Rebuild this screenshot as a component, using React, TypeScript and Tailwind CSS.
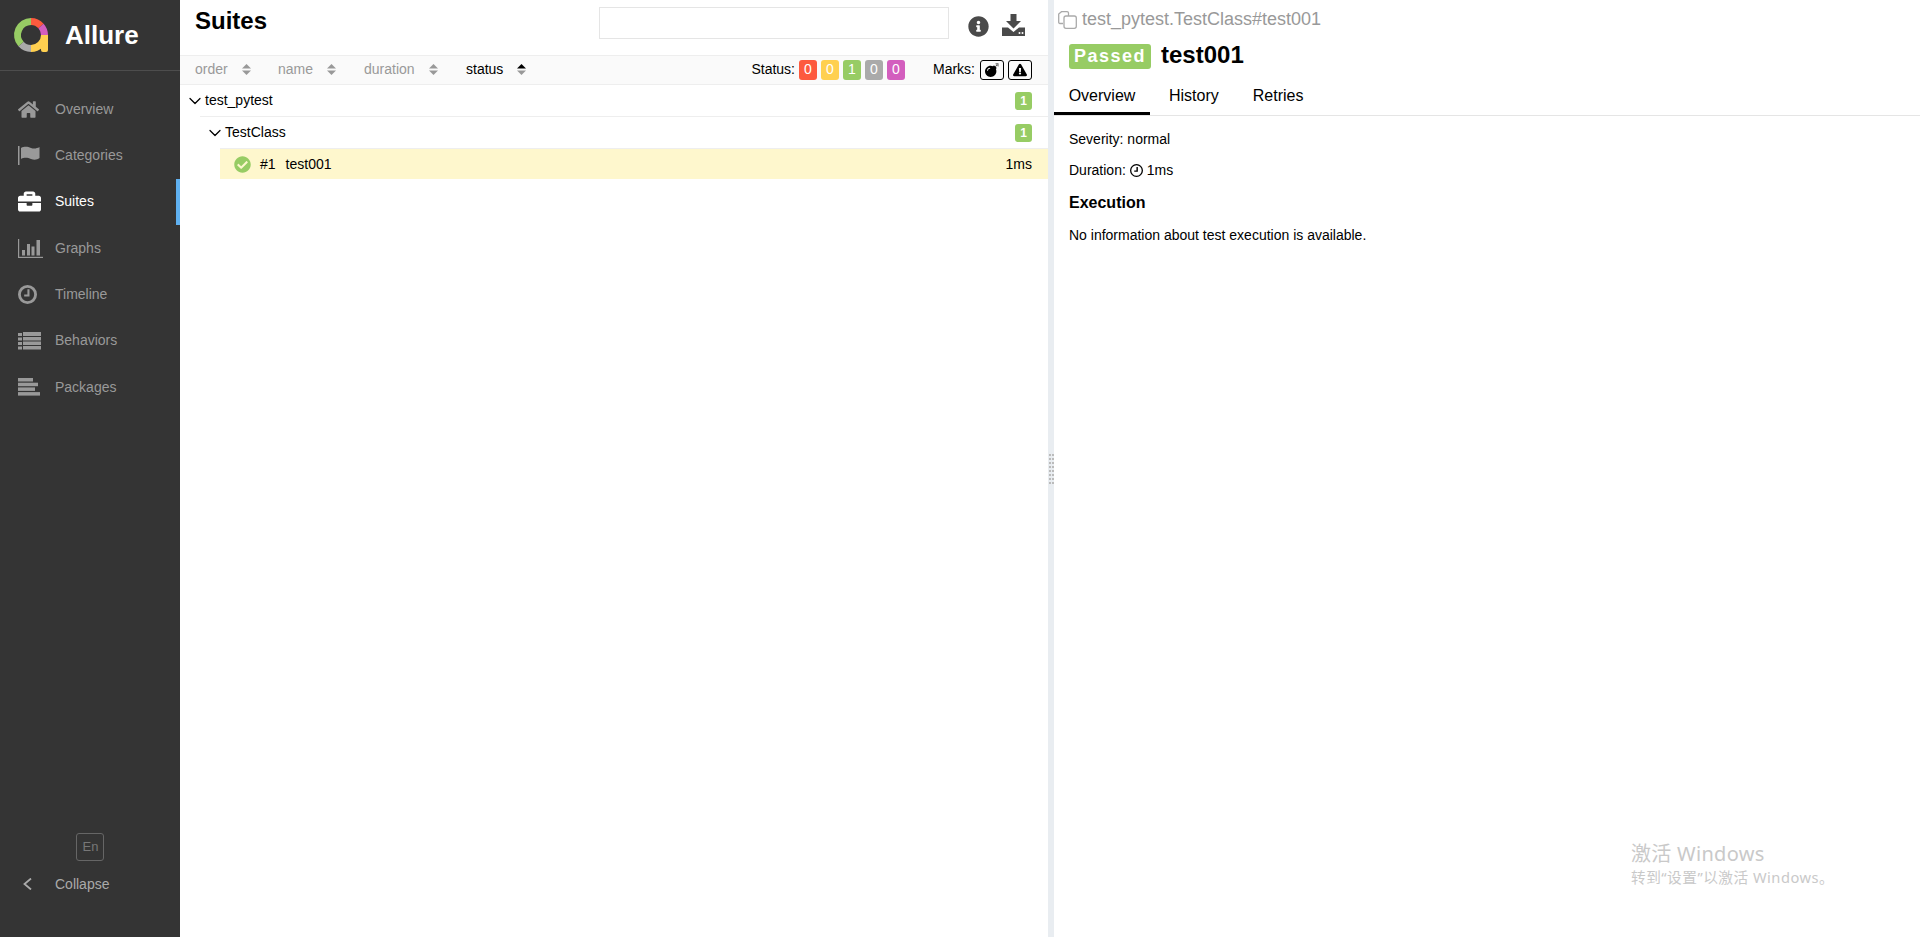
import { ReactNode } from "react";
import { FaBomb, FaBriefcase, FaCheckCircle, FaExclamationTriangle, FaHome, FaInfoCircle } from "react-icons/fa";
import { LuChevronDown } from "react-icons/lu";

const Logo = () => (
  <svg width="36" height="36" viewBox="0 0 36 36" fill="none">
    <path d="M28 18 H35 V33 Q35 35 33 35 H30 Q28 35 28 33 Z" fill="#ffd050" />
    <path d="M18 4.500 A13.500 13.500 0 0 1 28 9" stroke="#fd5a3e" strokeWidth="7" />
    <path d="M28 9 A13.500 13.500 0 0 1 31.500 18" stroke="#d35ebe" strokeWidth="7" />
    <path d="M31.500 18 A13.500 13.500 0 0 1 18 31.500" stroke="#ffd050" strokeWidth="7" />
    <path d="M18 31.500 A13.500 13.500 0 0 1 8 27" stroke="#aaaaaa" strokeWidth="7" />
    <path d="M8 27 A13.500 13.500 0 0 1 18 4.500" stroke="#97cc64" strokeWidth="7" />
  </svg>
);

const FlagIcon = () => (
  <svg width="22" height="19" viewBox="0 0 22 19" fill="currentColor">
    <rect x="0" y="0" width="1.500" height="19" />
    <path d="M3 2 C7 0 10 1 13 2 C16 3 19 2.500 21.500 1 V12 C19 14 16 14 13 13 C10 12 7 11 3 13 Z" />
  </svg>
);

const ChartIcon = () => (
  <svg width="25" height="19" viewBox="0 0 25 19" fill="currentColor">
    <rect x="0" y="0" width="1.200" height="19" />
    <rect x="0" y="17.800" width="25" height="1.200" />
    <rect x="4" y="11" width="3" height="5.500" />
    <rect x="9" y="5" width="3" height="11.500" />
    <rect x="13.500" y="7.500" width="3" height="9" />
    <rect x="18.500" y="1" width="3.500" height="15.500" />
  </svg>
);

const ClockIcon = ({ size, width }: { size: number; width: number }) => (
  <svg width={size} height={size} viewBox="0 0 20 20" fill="none" stroke="currentColor">
    <circle cx="10" cy="10" r={10 - width / 2} strokeWidth={width} />
    <path d="M11 4.500 V11 H6.500" strokeWidth="2.200" />
  </svg>
);

const ListIcon = () => (
  <svg width="23" height="18" viewBox="0 0 23 18" fill="currentColor">
    <rect x="0" y="1" width="4" height="3" /><rect x="5" y="0" width="18" height="4" />
    <rect x="0" y="5.500" width="4" height="3" /><rect x="5" y="5" width="18" height="3.500" />
    <rect x="0" y="10" width="4" height="3" /><rect x="5" y="9.500" width="18" height="3.500" />
    <rect x="0" y="14.500" width="4" height="3" /><rect x="5" y="14" width="18" height="3.500" />
  </svg>
);

const PackagesIcon = () => (
  <svg width="23" height="18" viewBox="0 0 23 18" fill="currentColor">
    <rect x="0" y="0" width="15" height="3.500" />
    <rect x="0" y="4.700" width="20" height="3.500" />
    <rect x="0" y="9.400" width="17" height="3.500" />
    <rect x="0" y="14.100" width="22" height="3.500" />
  </svg>
);

const DownloadIcon = () => (
  <svg width="23" height="22" viewBox="0 0 23 22" fill="#4a4a4a">
    <path d="M8.500 0 H14.500 V7 H19 L11.500 14.500 L4 7 H8.500 Z" />
    <path d="M0 13.500 H6 L11.500 18 L17 13.500 H23 V22 H0 Z" />
    <circle cx="17.500" cy="19" r="1" fill="#fff" />
    <circle cx="20.500" cy="19" r="1" fill="#fff" />
  </svg>
);

const CopyIcon = () => (
  <svg width="19" height="18" viewBox="0 0 19 18" fill="none" stroke="#aaaaaa" strokeWidth="1.300">
    <path d="M5 12.500 H2 Q0.700 12.500 0.700 11 V3 L3.500 0.700 H9 Q10.500 0.700 10.500 2 V5" />
    <rect x="6" y="5" width="12.300" height="12.300" rx="2" />
  </svg>
);

const SortArrows = ({ active }: { active?: boolean }) => (
  <svg width="9" height="11" viewBox="0 0 9 11" className="shrink-0">
    <path d="M4.500 0 L9 4.500 H0 Z" fill={active ? "#000" : "#999"} />
    <path d="M0 6.500 H9 L4.500 11 Z" fill="#999" />
  </svg>
);

const navItems: { label: string; icon: ReactNode; active?: boolean }[] = [
  { label: "Overview", icon: <FaHome size={21} /> },
  { label: "Categories", icon: <FlagIcon /> },
  { label: "Suites", icon: <FaBriefcase size={23} />, active: true },
  { label: "Graphs", icon: <ChartIcon /> },
  { label: "Timeline", icon: <ClockIcon size={19} width={3} /> },
  { label: "Behaviors", icon: <ListIcon /> },
  { label: "Packages", icon: <PackagesIcon /> },
];

const Sidebar = () => (
  <aside className="flex h-full w-[180px] shrink-0 flex-col bg-[#343434] text-[14px]">
    <div className="flex h-[71px] items-center border-b border-[#4d4d4d] pl-[13px]">
      <Logo />
      <span className="ml-[16px] text-[26px] font-bold text-white">Allure</span>
    </div>
    <nav className="mt-[15px] flex flex-col">
      {navItems.map((item) => (
        <div
          key={item.label}
          className={`flex h-[46.33px] items-center border-r-4 ${item.active ? "border-[#5fb0f0] text-white" : "border-transparent text-[#999999]"}`}
        >
          <span className="flex w-[55px] justify-start pl-[18px]">{item.icon}</span>
          {item.label}
        </div>
      ))}
    </nav>
    <div className="mt-auto flex flex-col pb-[41px]">
      <div className="flex justify-center">
        <span className="flex h-[28px] w-[28px] items-center justify-center rounded-[3px] border border-[#666666] pl-[1px] text-[13px] text-[#777777]">En</span>
      </div>
      <div className="mt-[11px] flex h-[24px] items-center text-[#aaaaaa]">
        <span className="flex w-[55px] pl-[23px]">
          <svg width="9" height="12" viewBox="0 0 9 12" fill="none" stroke="currentColor" strokeWidth="1.800">
            <path d="M8 0.500 L1.500 6 L8 11.500" />
          </svg>
        </span>
        Collapse
      </div>
    </div>
  </aside>
);

const sorters = [
  { label: "order", width: "w-[83px]" },
  { label: "name", width: "w-[86px]" },
  { label: "duration", width: "w-[102px]" },
  { label: "status", width: "w-[70px]", active: true },
];

const statuses = [
  { value: 0, color: "bg-[#fd5a3e]" },
  { value: 0, color: "bg-[#ffd050]" },
  { value: 1, color: "bg-[#97cc64]" },
  { value: 0, color: "bg-[#aaaaaa]" },
  { value: 0, color: "bg-[#d35ebe]" },
];

const CountBadge = () => (
  <span className="flex h-[18px] w-[17px] items-center justify-center rounded-[3px] bg-[#97cc64] text-[12px] font-bold text-white">1</span>
);

const TreePanel = () => (
  <section className="flex h-full w-[868px] shrink-0 flex-col text-[14px]">
    <header className="flex h-[55px] items-start pl-[15px]">
      <h2 className="mt-[5px] text-[24px] font-bold leading-[32px]">Suites</h2>
      <input className="ml-auto mt-[7px] h-[32px] w-[350px] border border-[#e5e5e5]" />
      <span className="ml-[19px] mt-[16px] text-[#4a4a4a]"><FaInfoCircle size={21} /></span>
      <span className="ml-[13px] mr-[23px] mt-[14px]"><DownloadIcon /></span>
    </header>
    <div className="flex h-[30px] items-center border-y border-[#eeeeee] bg-[#fafafa] pb-[1px] pl-[15px]">
      {sorters.map((s) => (
        <div key={s.label} className={`flex items-center gap-[14px] ${s.width} ${s.active ? "text-black" : "text-[#999999]"}`}>
          {s.label}
          <SortArrows active={s.active} />
        </div>
      ))}
      <div className="ml-auto flex items-center">
        Status:
        <div className="ml-[4px] flex gap-[4px]">
          {statuses.map((s, i) => (
            <span key={i} className={`flex h-[20px] w-[18px] items-center justify-center rounded-[3px] text-[14px] text-white ${s.color}`}>{s.value}</span>
          ))}
        </div>
        <span className="ml-[28px]">Marks:</span>
        <div className="ml-[5px] mr-[16px] flex gap-[4px]">
          <span className="flex h-[20px] w-[24px] items-center justify-center rounded-[3px] border border-black"><FaBomb size={14} /></span>
          <span className="flex h-[20px] w-[24px] items-center justify-center rounded-[3px] border border-black"><FaExclamationTriangle size={14} /></span>
        </div>
      </div>
    </div>
    <div className="ml-[20px] flex h-[32px] items-center border-b border-[#eeeeee] pr-[16px]">
      <span className="-ml-[15px] w-[20px]"><LuChevronDown size={20} strokeWidth={1.5} /></span>
      <span>test_pytest</span>
      <span className="ml-auto"><CountBadge /></span>
    </div>
    <div className="ml-[40px] flex h-[32px] items-center border-b border-[#eeeeee] pr-[16px]">
      <span className="-ml-[15px] w-[20px]"><LuChevronDown size={20} strokeWidth={1.5} /></span>
      <span>TestClass</span>
      <span className="ml-auto"><CountBadge /></span>
    </div>
    <div className="ml-[40px] flex h-[30px] items-center bg-[#fef7cd] pl-[14px] pr-[16px]">
      <span className="text-[#97cc64]"><FaCheckCircle size={17} /></span>
      <span className="ml-[9px]">#1</span>
      <span className="ml-[10px]">test001</span>
      <span className="ml-auto">1ms</span>
    </div>
  </section>
);

const Splitter = () => (
  <div className="flex h-full w-[6px] shrink-0 items-center justify-center bg-[#e9edf1]">
    <div className="grid grid-cols-2 gap-x-[1px] gap-y-[2px]">
      {Array.from({ length: 16 }).map((_, i) => (
        <span key={i} className="h-[2px] w-[2px] bg-[#bbbbbb]" />
      ))}
    </div>
  </div>
);

const DetailPanel = () => (
  <section className="flex h-full flex-1 flex-col text-[14px]">
    <div className="flex h-[39px] items-center gap-[5px] pl-[4px] text-[18px] text-[#999999]">
      <CopyIcon />
      test_pytest.TestClass#test001
    </div>
    <div className="flex h-[32px] items-center pl-[15px]">
      <span className="mt-[2px] flex h-[25px] w-[82px] items-center justify-center rounded-[3px] bg-[#97cc64] text-[18px] font-bold tracking-[1.5px] text-white">Passed</span>
      <h2 className="ml-[10px] text-[24px] font-bold">test001</h2>
    </div>
    <div className="flex h-[45px] items-end border-b border-[#e5e5e5] text-[16px]">
      <span className="flex h-[36px] w-[96px] items-center justify-center border-b-[3px] border-black">Overview</span>
      <span className="ml-[19px] flex h-[36px] items-center pb-[3px]">History</span>
      <span className="ml-[34px] flex h-[36px] items-center pb-[3px]">Retries</span>
    </div>
    <div className="flex flex-col pl-[15px]">
      <div className="mt-[13px] leading-[20px]">Severity: normal</div>
      <div className="mt-[11px] flex items-center gap-[4px] leading-[20px]">
        Duration: <ClockIcon size={13} width={2} /> 1ms
      </div>
      <h3 className="mt-[12px] text-[16px] font-bold leading-[22px]">Execution</h3>
      <div className="mt-[11px] leading-[20px]">No information about test execution is available.</div>
    </div>
  </section>
);

export default function App() {
  return (
    <div className="relative flex h-[937px] w-[1920px] overflow-hidden bg-white font-['Liberation_Sans',Arial,sans-serif] text-black">
      <Sidebar />
      <TreePanel />
      <Splitter />
      <DetailPanel />
      <div className="absolute left-[1631px] top-[840px] font-['Noto_Sans','Noto_Sans_CJK_SC',sans-serif] text-[#c9c9c9]">
        <div className="text-[20px] leading-[27px] tracking-[0.3px]">激活 Windows</div>
        <div className="text-[14.67px] leading-[20px] tracking-[0.5px]">转到“设置”以激活 Windows。</div>
      </div>
    </div>
  );
}
